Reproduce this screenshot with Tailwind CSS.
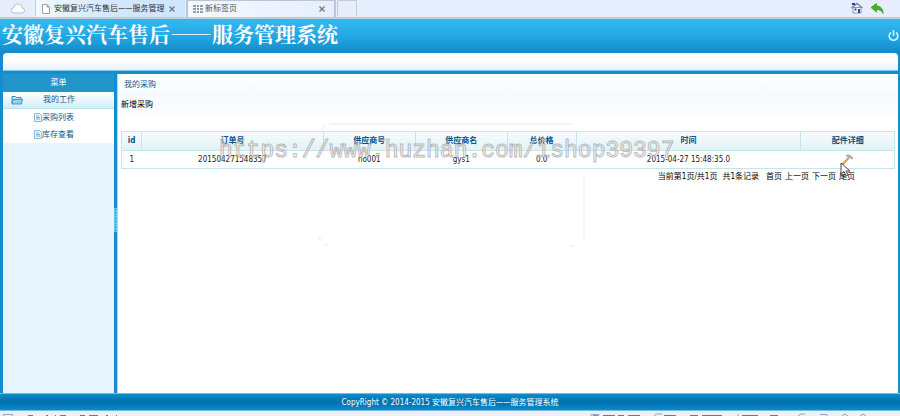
<!DOCTYPE html>
<html lang="zh-CN">
<head>
  <meta charset="UTF-8">
  <title>安徽复兴汽车售后——服务管理系统</title>
  <meta name="viewport" content="width=device-width, initial-scale=1.0">
  <script src="https://cdn.jsdelivr.net/npm/@tailwindcss/browser@4"></script>
</head>
<body class="h-screen flex flex-col overflow-hidden bg-[#128dce] font-['DejaVu_Sans_Condensed','Noto_Sans_CJK_SC',sans-serif] text-[8px] leading-3 text-black">

  <!-- Pestañas del navegador -->
  <nav class="h-[19px] shrink-0 flex items-start bg-[#e6eefd] border-b-2 border-[#c3cbd4] text-[#333]">
    <button class="w-9 h-4 flex justify-center items-center border-r border-[#c5cde0]" aria-label="云">
      <svg width="14" height="11" viewBox="0 0 14 11"><path d="M3 10a2.500 2.500 0 0 1-.5-5C3 2.500 5 1 7 1s4 1.500 4.300 4A2.500 2.500 0 0 1 11 10z" fill="#fff" stroke="#b3bccb"/></svg>
    </button>
    <div class="w-[149px] h-[17px] pl-[6px] pr-[10px] flex items-center bg-linear-to-r from-[#f3f8ff] via-[#d3e8fe] to-[#cfe5fd]">
      <svg width="8" height="10" viewBox="0 0 8 10"><path d="M.5.500h4.500l2.500 2.500v6.500h-7zM5 .500V3h2.500" fill="#fff" stroke="#a5a092"/></svg>
      <a href="#" class="ml-1 flex-1 overflow-hidden whitespace-nowrap">安徽复兴汽车售后——服务管理系统</a>
      <button class="ml-1" aria-label="关闭"><svg width="6" height="6" viewBox="0 0 6 6"><path d="M.5.500l5 5m0-5l-5 5" stroke="#777" stroke-width="1.400"/></svg></button>
    </div>
    <div class="w-[150px] h-[17px] ml-px pl-[5px] pr-[9px] flex items-center border-x-2 border-t border-[#bcc4d8] bg-linear-to-r from-[#f5f9ff] to-[#e6eefd]">
      <svg width="10" height="8" viewBox="0 0 10 8" fill="#929bad"><path d="M0 0h3v2H0zM4 0h2v2H4zM7 0h3v2H7zM0 3h3v2H0zM4 3h2v2H4zM7 3h3v2H7zM0 6h3v2H0zM4 6h2v2H4zM7 6h3v2H7z"/></svg>
      <a href="#" class="ml-[2px] flex-1 whitespace-nowrap text-[#555]">新标签页</a>
      <button aria-label="关闭"><svg width="6" height="6" viewBox="0 0 6 6"><path d="M.5.500l5 5m0-5l-5 5" stroke="#777" stroke-width="1.400"/></svg></button>
    </div>
    <button class="w-5 h-4 ml-px rounded-t-xs border border-b-0 border-[#c2c9da]" aria-label="新建标签"></button>
    <div class="ml-auto mr-4 h-4 flex items-center gap-2">
      <button aria-label="主页">
        <svg width="12" height="12" viewBox="0 0 12 12"><path d="M2 5.500h8V11H2z" fill="#fff" stroke="#8e94a8"/><path d="M.5 6L6 1.500 11.500 6" fill="none" stroke="#7f87a6" stroke-width="1.500"/><path d="M1 1h3v2H1z" fill="#2238c8"/><path d="M7 7h2v4H7z" fill="#1d4fa0"/><path d="M3.500 6.500h2v2h-2z" fill="#444"/></svg>
      </button>
      <button aria-label="返回">
        <svg width="13" height="11" viewBox="0 0 13 11"><path d="M0 4.500L5.500.500v2.500c4 0 6.500 2.500 6.500 7.500C10.500 7.500 9 6.500 5.500 6.500V9z" fill="#42b51e" stroke="#218511" stroke-width=".6"/></svg>
      </button>
    </div>
  </nav>

  <header class="h-[34px] shrink-0 flex items-center justify-between bg-linear-to-b from-[#33b9f2] via-[#24a8e4] to-[#118bcb]">
    <h1 class="self-start pl-[2px] text-[21px] leading-7 font-bold text-white whitespace-nowrap font-['Noto_Serif_CJK_SC','Noto_Sans_CJK_SC',serif]">安徽复兴汽车售后——服务管理系统</h1>
    <button class="mr-px" aria-label="退出">
      <svg width="11" height="12" viewBox="0 0 11 12" fill="none" stroke="#d3effc" stroke-width="1.600"><path d="M3 2.500a4.300 4.300 0 1 0 5 0M5.500 0v6"/></svg>
    </button>
  </header>

  <div class="h-[18px] shrink-0 ml-[3px] mr-[2px] rounded-t-sm border-b border-[#8dc6e6] bg-linear-to-b from-white from-45% to-[#e2f1fb]"></div>

  <div class="flex-1 min-h-0 flex mt-[3px] ml-[3px] mr-[2px]">
    <!-- Menú lateral -->
    <aside class="w-[111px] shrink-0 bg-[#e6f5ff] text-center text-[#105a8a]">
      <h2 class="h-[18px] leading-[18px] bg-[#2295cb] text-white">菜单</h2>
      <a href="#" class="h-[17px] flex items-center border-b border-[#b5e2f0] bg-linear-to-b from-white to-[#d5edf5]">
        <svg class="ml-2" width="12" height="10" viewBox="0 0 12 10"><path d="M1 8.500V1.500h3.500l1 1H10v6z" fill="#b4e3f4" stroke="#3690b5"/><path d="M1 9l1-4.500H11.500L10.500 9z" fill="#8fd6ee" stroke="#2a86ae" stroke-width=".8"/></svg>
        <span class="ml-5">我的工作</span>
      </a>
      <ul class="bg-white">
        <li><a href="#" class="h-[17px] pl-[31px] flex items-center">
          <svg width="8" height="9" viewBox="0 0 8 9"><path d="M.5.500h5l2 2v6h-7z" fill="#e8f6fd" stroke="#8bbbd8"/><path d="M2 3h3M2 4.500h4M2 6h4" stroke="#62a5cf" stroke-width=".8"/></svg>
          <span>采购列表</span></a></li>
        <li><a href="#" class="h-[17px] pl-[31px] flex items-center">
          <svg width="8" height="9" viewBox="0 0 8 9"><path d="M.5.500h5l2 2v6h-7z" fill="#e8f6fd" stroke="#8bbbd8"/><path d="M2 3h3M2 4.500h4M2 6h4" stroke="#62a5cf" stroke-width=".8"/></svg>
          <span>库存查看</span></a></li>
      </ul>
    </aside>

    <div class="w-[3px] shrink-0 flex items-center pb-7">
      <button class="w-full h-6 bg-[#62c3ee]" aria-label="折叠菜单">
        <svg width="3" height="24" viewBox="0 0 3 24"><path d="M1.500 1v23" stroke="#2b8fc4" stroke-dasharray="1 2"/></svg>
      </button>
    </div>

    <main class="relative flex-1 min-w-0 bg-white border-l border-[#a9d9f0]">
      <h2 class="h-5 leading-[22px] pl-[6px] text-[#105a8a] bg-linear-to-b from-white to-[#f4fbff]">我的采购</h2>
      <div class="h-[22px] leading-[22px] pl-[3px] bg-linear-to-b from-[#f7f9fe] to-[#fbffff]"><a href="#">新增采购</a></div>

      <div class="pt-[15px] pl-[3px] pr-[3px]">
        <table class="w-full table-fixed border-collapse border border-[#c5e5ee] text-center">
          <colgroup>
            <col class="w-[2.6%]"><col class="w-[23.5%]"><col class="w-[11.9%]"><col class="w-[11.9%]"><col class="w-[8.9%]"><col class="w-[29.1%]"><col class="w-[12.1%]">
          </colgroup>
          <thead>
            <tr class="h-[19px] border-b border-[#c5e5ee] bg-linear-to-b from-[#f7fcfe] to-[#e0f3f6] text-[#0c5283]">
              <th class="border-r border-[#c5e5ee]">id</th>
              <th class="border-r border-[#c5e5ee]">订单号</th>
              <th class="border-r border-[#c5e5ee]">供应商号</th>
              <th class="border-r border-[#c5e5ee]">供应商名</th>
              <th class="border-r border-[#c5e5ee]">总价格</th>
              <th class="border-r border-[#c5e5ee]">时间</th>
              <th>配件详细</th>
            </tr>
          </thead>
          <tbody>
            <tr class="h-[18px] text-[#222]">
              <td>1</td>
              <td>201504271548357</td>
              <td>no001</td>
              <td>gys1</td>
              <td>0.0</td>
              <td>2015-04-27 15:48:35.0</td>
              <td>
                <a href="#" class="flex justify-center" aria-label="配件详细">
                  <svg width="13" height="12" viewBox="0 0 13 12"><path d="M1 11l7-7.500" stroke="#dc9c4c" stroke-width="2"/><path d="M5 1.500c3-1.500 5 0 7 3l-1.500.500C9.500 3.500 8 3 5 1.500z" fill="#aaa" stroke="#999" stroke-width=".7"/></svg>
                </a>
              </td>
            </tr>
          </tbody>
        </table>
        <div class="pt-[2px] pr-10 flex justify-end gap-[3px] whitespace-nowrap">
          <span class="mr-[2px]">当前第1页/共1页</span>
          <span class="mr-1">共1条记录</span>
          <a href="#">首页</a><a href="#">上一页</a><a href="#">下一页</a><a href="#">尾页</a>
        </div>
      </div>

      <!-- Marca de agua -->
      <div class="absolute left-[101px] top-[63px] pointer-events-none whitespace-nowrap font-['Liberation_Mono',monospace] text-[23px] leading-7 text-white/40 [-webkit-text-stroke:1px_#a8a8a8cc]">https://www.huzhan.com/ishop39397</div>
      <svg class="absolute left-[199px] top-[46px] pointer-events-none" width="270" height="128" viewBox="0 0 270 128" fill="none" stroke="#f5f5f5" stroke-width="2"><path d="M13 4h243M267 57v63M1 117l4 4m2 2l4 3M253 126h5M4 9l4-4"/></svg>
      <svg class="absolute right-[47px] top-[88px] pointer-events-none" width="11" height="15" viewBox="0 0 11 15"><path d="M1 1v11l3-2.500L6 14l2-1-2-4h4z" fill="#fff" stroke="#333" stroke-width=".9"/></svg>
    </main>
  </div>

  <footer class="h-[18px] shrink-0 border-y border-[#75bce5] bg-linear-to-b from-[#0d8dcd] via-[#0070ac] to-[#0b8bcc] text-center leading-[18px] text-white">
    CopyRight © 2014-2015 安徽复兴汽车售后——服务管理系统
  </footer>

  <!-- Barra de estado, asoma solo el borde superior -->
  <div class="h-[5px] shrink-0 flex justify-between overflow-hidden bg-[#edf0f8]">
    <svg width="130" height="5" viewBox="0 0 130 5" fill="none"><path d="M3.500 5V3.500h9V5" stroke="#8ba6bd"/><path d="M28 4.500h5m13 0h2m7 0h1m4 0h6m14 0h5m4 0h9m8 0h2m8 0h1" stroke="#777"/></svg>
    <svg width="310" height="5" viewBox="0 0 310 5" fill="none"><path d="M1 5V3.500h8V5M64 5l2-2h6M148 5V3M208 5l3-2h4M230 3.500h7V5M252 5l3-2 3 2M270 5l3-2 3 2" stroke="#8ba6cc"/><path d="M3 4.500h5" stroke="#3fa9f5"/><path d="M13 4.500h12m3 0h6m4 0h12m24 0h12m14 0h8m4 0h20m20 0h16m12 0h8" stroke="#777"/></svg>
  </div>
</body>
</html>
